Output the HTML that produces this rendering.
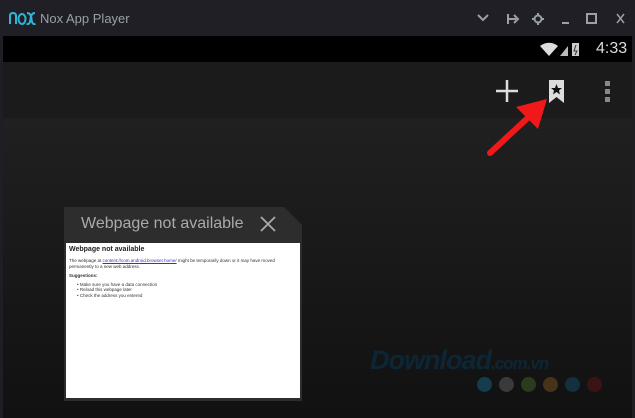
<!DOCTYPE html><html><head><style>
*{margin:0;padding:0;box-sizing:border-box}
body{width:635px;height:418px;overflow:hidden;background:#1f1e24;font-family:"Liberation Sans",sans-serif;position:relative}
.abs{position:absolute}
</style></head><body>
<div class="abs" style="left:0;top:0;width:635px;height:36px;background:#1f1f25"></div>
<svg class="abs" style="left:8px;top:11px" width="28" height="14" stroke="#2fb4d6" stroke-width="2" fill="none">
<path d="M2 13V5q0-3 3-3t3 3v8"/><ellipse cx="14" cy="8" rx="3.5" ry="5"/><path d="M19 2q4 0 4.5 6t4 5M27 2q-4 0-4.5 6t-4 5"/>
</svg>
<div class="abs" style="left:40px;top:11px;color:#9aa0a8;font-size:13px">Nox App Player</div>
<svg class="abs" style="left:470px;top:8px" width="160" height="22" stroke="#9aa0a8" fill="none" stroke-width="2">
<path d="M8 7l5 5 5-5"/><path d="M38 6v10M38 11h8M44 7l4 4-4 4"/>
<circle cx="68" cy="11" r="3.5"/><path d="M68 5v2M68 15v2M62 11h2M72 11h2"/>
<path d="M92 15h7"/><rect x="117" y="6" width="9" height="9"/><path d="M147 6l7 9M154 6l-7 9" stroke-width="1.5"/>
</svg>
<div class="abs" style="left:3px;top:36px;width:629px;height:26px;background:#000"></div>
<svg class="abs" style="left:538px;top:40px" width="50" height="18">
<path d="M2 6a14 14 0 0 1 18 0L11 16z" fill="#ddd"/><path d="M22 16l8-10v10z" fill="#bbb"/>
<rect x="34" y="3" width="7" height="13" fill="#ccc"/><path d="M38 5l-2 6h3l-2 4" stroke="#333" fill="none"/>
</svg>
<div class="abs" style="left:596px;top:40px;color:#ddd;font-size:16px">4:33</div>
<div class="abs" style="left:3px;top:62px;width:629px;height:56px;background:#1b1b1c"></div>
<div class="abs" style="left:3px;top:118px;width:629px;height:300px;background:linear-gradient(#202020,#111)"></div>
<svg class="abs" style="left:490px;top:76px" width="130" height="30">
<path d="M17 4v22M6 15h22" stroke="#ddd" stroke-width="2.5"/>
<path d="M59 4h15v23l-7.5-6-7.5 6z" fill="#ddd"/><path d="M66.5 8l1.5 4h4l-3 2.5 1 4-3.5-2.5-3.5 2.5 1-4-3-2.5h4z" fill="#111"/>
<rect x="115" y="5" width="5" height="5" fill="#888"/><rect x="115" y="13" width="5" height="5" fill="#888"/><rect x="115" y="21" width="5" height="5" fill="#888"/>
</svg>
<svg class="abs" style="left:480px;top:95px" width="75" height="70">
<path d="M10 58L52 19" stroke="#f01818" stroke-width="6" stroke-linecap="round"/>
<path d="M67 4L36 12l22 22z" fill="#f01818"/>
</svg>
<div class="abs" style="left:64px;top:207px;width:238px;height:36px;background:#2d2d2d;clip-path:polygon(0 0,220px 0,238px 18px,238px 36px,0 36px)"></div>
<div class="abs" style="left:81px;top:215px;color:#aaa;font-size:16px">Webpage not available</div>
<svg class="abs" style="left:259px;top:215px" width="18" height="18"><path d="M2 2l14 14M16 2L2 16" stroke="#aaa" stroke-width="1.8"/></svg>
<div class="abs" style="left:64px;top:243px;width:238px;height:158px;background:#2d2d2d"></div>
<div class="abs" style="left:66px;top:243px;width:234px;height:155px;background:#fff;padding:2px 3px;color:#333;font-size:4.5px;line-height:5.5px">
<div style="font-size:7px;font-weight:bold;line-height:9px;color:#222">Webpage not available</div>
<div style="margin-top:4px">The webpage at <span style="color:#33c;text-decoration:underline">content://com.android.browser.home/</span> might be temporarily down or it may have moved permanently to a new web address.</div>
<div style="margin-top:4px;font-weight:bold">Suggestions:</div>
<div style="margin-top:3px;padding-left:8px">• Make sure you have a data connection<br>• Reload this webpage later<br>• Check the address you entered</div>
</div>
<div class="abs" style="left:370px;top:345px;color:#0d2636;font-size:27px;font-weight:bold;font-style:italic;letter-spacing:-1px">Download<span style="font-size:17px">.com.vn</span></div>
<div class="abs" style="left:477px;top:377px;width:15px;height:15px;border-radius:50%;background:#143c4c"></div>
<div class="abs" style="left:499px;top:377px;width:15px;height:15px;border-radius:50%;background:#3a3a3a"></div>
<div class="abs" style="left:521px;top:377px;width:15px;height:15px;border-radius:50%;background:#2c3a1e"></div>
<div class="abs" style="left:543px;top:377px;width:15px;height:15px;border-radius:50%;background:#45331a"></div>
<div class="abs" style="left:565px;top:377px;width:15px;height:15px;border-radius:50%;background:#13303f"></div>
<div class="abs" style="left:587px;top:377px;width:15px;height:15px;border-radius:50%;background:#3a1414"></div>
</body></html>
